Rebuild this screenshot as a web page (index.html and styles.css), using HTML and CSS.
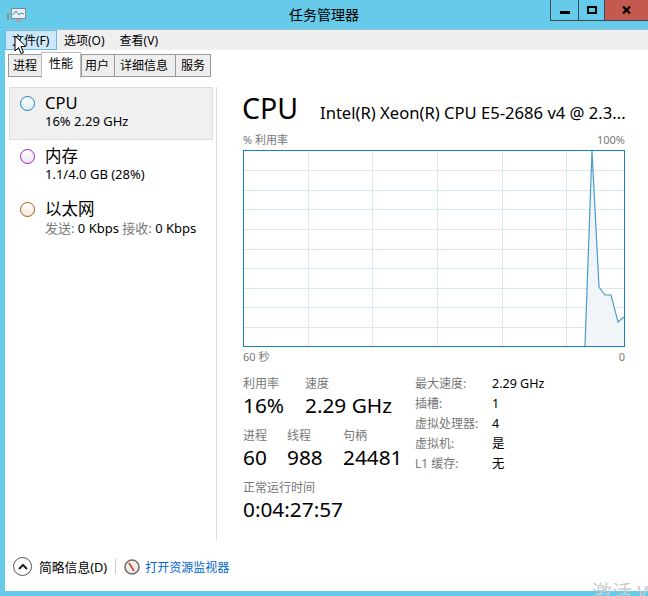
FILE: index.html
```html
<!DOCTYPE html>
<html lang="zh-CN">
<head>
    <meta charset="UTF-8">
    <title>任务管理器</title>
    <link rel="stylesheet" href="styles.css">
</head>
<body>
    <div class="window">
        <header class="titlebar">
            <svg class="app-icon" width="20" height="15" viewBox="0 0 20 15">
                <rect x="0" y="5" width="2" height="7" fill="#7d9a84"/>
                <rect x="4.5" y="0.5" width="14" height="10" fill="#e8f2f6" stroke="#7b8a92"/>
                <path d="M6 7 L9 3 L12 7 L14 5 L17 6" fill="none" stroke="#3f8fc0"/>
                <rect x="9" y="11" width="5" height="3" fill="#9aa6ac"/>
            </svg>
            <div class="title">任务管理器</div>
            <div class="controls">
                <div class="ctl ctl-min"><span class="min-bar"></span></div>
                <div class="ctl ctl-max"><span class="max-box"></span></div>
                <div class="ctl ctl-close">
                    <svg width="9" height="8" viewBox="0 0 9 8"><path d="M1 0.5 L8 7.5 M8 0.5 L1 7.5" stroke="#000" stroke-width="2.2"/></svg>
                </div>
            </div>
        </header>

        <nav class="menubar">
            <div class="menu-item hover">文件(F)</div>
            <div class="menu-item">选项(O)</div>
            <div class="menu-item menu-view">查看(V)</div>
        </nav>

        <div class="tabs">
            <div class="tab">进程</div>
            <div class="tab active">性能</div>
            <div class="tab tab-users">用户</div>
            <div class="tab tab-wide">详细信息</div>
            <div class="tab tab-last">服务</div>
        </div>

        <div class="content">
            <aside class="sidebar">
                <div class="res selected">
                    <span class="dot dot-cpu"></span>
                    <div>
                        <div class="res-name">CPU</div>
                        <div class="res-sub">16% 2.29 GHz</div>
                    </div>
                </div>
                <div class="res">
                    <span class="dot dot-mem"></span>
                    <div>
                        <div class="res-name">内存</div>
                        <div class="res-sub">1.1/4.0 GB (28%)</div>
                    </div>
                </div>
                <div class="res res-net">
                    <span class="dot dot-net"></span>
                    <div>
                        <div class="res-name">以太网</div>
                        <div class="res-sub"><span class="muted">发送:</span> 0 Kbps <span class="muted">接收:</span> 0 Kbps</div>
                    </div>
                </div>
            </aside>

            <main class="detail">
                <div class="detail-head">
                    <h1>CPU</h1>
                    <div class="model">Intel(R) Xeon(R) CPU E5-2686 v4 @ 2.3...</div>
                </div>
                <div class="axis axis-top"><span>% 利用率</span><span>100%</span></div>
                <svg class="chart" width="382" height="197" viewBox="0 0 382 197">
                    <g stroke="#d9e9f3" stroke-width="1">
                        <path d="M0 20.5H382M0 40.5H382M0 59.5H382M0 79.5H382M0 99.5H382M0 118.5H382M0 138.5H382M0 157.5H382M0 177.5H382"/>
                        <path d="M65.5 0V197M129.5 0V197M194.5 0V197M259.5 0V197M323.5 0V197"/>
                    </g>
                    <path d="M342 196 L349 1 L356 137 L362 145 L368 145 L375 172 L381 167 V196 Z" fill="#f0f5fa"/>
                    <path d="M342 196 L349 1 L356 137 L362 145 L368 145 L375 172 L381 167" fill="none" stroke="#4a9ccb" stroke-width="1.2"/>
                    <rect x="0.5" y="0.5" width="381" height="196" fill="none" stroke="#1a7fb8"/>
                </svg>
                <div class="axis axis-bottom"><span>60 秒</span><span>0</span></div>

                <div class="stats">
                    <div class="stats-left">
                        <div class="stat-row">
                            <div class="stat stat-usage"><div class="stat-label">利用率</div><div class="stat-value">16%</div></div>
                            <div class="stat"><div class="stat-label">速度</div><div class="stat-value">2.29 GHz</div></div>
                        </div>
                        <div class="stat-row">
                            <div class="stat stat-proc"><div class="stat-label">进程</div><div class="stat-value">60</div></div>
                            <div class="stat stat-thread"><div class="stat-label">线程</div><div class="stat-value">988</div></div>
                            <div class="stat"><div class="stat-label">句柄</div><div class="stat-value">24481</div></div>
                        </div>
                        <div class="stat-row">
                            <div class="stat"><div class="stat-label">正常运行时间</div><div class="stat-value">0:04:27:57</div></div>
                        </div>
                    </div>
                    <dl class="specs">
                        <dt>最大速度:</dt><dd>2.29 GHz</dd>
                        <dt>插槽:</dt><dd>1</dd>
                        <dt>虚拟处理器:</dt><dd>4</dd>
                        <dt>虚拟机:</dt><dd>是</dd>
                        <dt>L1 缓存:</dt><dd>无</dd>
                    </dl>
                </div>
            </main>
        </div>

        <footer class="footer">
            <span class="chevron">
                <svg width="10" height="7" viewBox="0 0 10 7"><path d="M1 6 L5 2 L9 6" fill="none" stroke="#222" stroke-width="2"/></svg>
            </span>
            <span class="less">简略信息(D)</span>
            <span class="sep"></span>
            <svg class="gauge" width="16" height="16" viewBox="0 0 16 16">
                <circle cx="8" cy="8" r="7" fill="#f3efe8" stroke="#77706a" stroke-width="1.6"/>
                <path d="M5 4 L10 12" stroke="#c8362c" stroke-width="1.5"/>
            </svg>
            <a class="monitor">打开资源监视器</a>
        </footer>
    </div>

    <svg class="cursor" width="13" height="20" viewBox="0 0 13 20">
        <path d="M1 1 V16 L4.5 12.5 L7 18.5 L9.5 17.5 L7 11.5 L12 11.5 Z" fill="#fff" stroke="#000"/>
    </svg>
    <div class="watermark">激活 Windows</div>
</body>
</html>
```

FILE: styles.css
```css
html, body { margin: 0; padding: 0; }
body {
    position: relative;
    width: 648px;
    height: 596px;
    overflow: hidden;
    font-family: "Noto Sans", "Noto Sans CJK SC", sans-serif;
    color: #000;
}

.window {
    display: flex;
    flex-direction: column;
    height: 596px;
    box-sizing: border-box;
    padding: 0 0 5px 5px;
    background-color: #66cbea;
}

/* Title bar */
.titlebar {
    display: grid;
    grid-template-columns: 1fr auto 1fr;
    height: 29px;
    flex: none;
    margin-left: -5px;
}
.app-icon { margin: 8px 0 0 7px; }
.title { font-size: 14px; line-height: 29px; }
.controls { display: flex; justify-self: end; height: 20px; }
.ctl {
    display: flex;
    align-items: center;
    justify-content: center;
    box-sizing: border-box;
    height: 21px;
    border: 1px solid #3f4a50;
    border-top: none;
    border-right: none;
}
.ctl-min { width: 28px; }
.ctl-max { width: 26px; }
.ctl-close { width: 44px; background-color: #c45a4f; border-right: none; }
.min-bar { display: block; width: 10px; height: 3px; margin-top: 4px; background: #000; }
.max-box { display: block; box-sizing: border-box; width: 10px; height: 8px; border: 2px solid #000; }

/* Menu */
.menubar {
    display: flex;
    height: 21px;
    flex: none;
    box-sizing: border-box;
    border-top: 1px solid #9fc4d2;
    background-color: #efefef;
    font-size: 12px;
}
.menu-item { padding: 0 6px; line-height: 19px; height: 20px; box-sizing: border-box; border: 1px solid transparent; }
.menu-item.hover { background-color: #cde8fa; border-color: #6cb8e0; width: 52px; }
.menu-view { margin-left: 1px; }

/* Tabs */
.tabs {
    display: flex;
    align-items: flex-end;
    height: 27px;
    flex: none;
    padding-left: 3px;
    background-color: #fff;
    font-size: 12px;
}
.tab {
    box-sizing: border-box;
    height: 23px;
    padding: 0 4px;
    line-height: 21px;
    background-color: #eee;
    border: 1px solid #999;
    border-right-width: 0;
}
.tab-users { padding: 0 5px 0 3px; }
.tab-wide { padding: 0 7px 0 5px; }
.tab-last { padding: 0 5px; border-right-width: 1px; }
.tab.active {
    height: 26px;
    margin-bottom: -1px;
    padding: 0 7px;
    line-height: 22px;
    background-color: #fff;
    border: 1px solid #bbb;
    border-bottom: none;
    position: relative;
}

/* Left column + detail */
.content { display: flex; flex: 1; background-color: #fff; min-height: 0; }
.sidebar {
    width: 208px;
    box-sizing: border-box;
    padding: 10px 0 0 4px;
    flex: none;
    margin-bottom: 11px;
}
.res { display: flex; align-items: flex-start; height: 53px; box-sizing: border-box; padding: 5px 0 0 10px; border: 1px solid transparent; }
.res.selected { background-color: #f0f0f0; border-color: #ddd; }
.dot { width: 13px; height: 13px; margin: 3px 10px 0 0; border-radius: 50%; border: 1px solid; flex: none; box-sizing: content-box; }
.dot-cpu { border-color: #1c84c0; background: linear-gradient(#fff, #dcecf6); }
.dot-mem { border-color: #9528b4; background: linear-gradient(#fff, #f1e2f6); }
.dot-net { border-color: #a75a14; background: linear-gradient(#fff, #f4e6d8); }
.res-name { font-size: 16.5px; line-height: 20px; }
.res-sub { font-size: 13px; line-height: 16px; white-space: nowrap; }
.res-net .res-sub { margin-top: 1px; }
.muted { color: #777; }

.detail {
    flex: 1;
    min-width: 0;
    margin: 10px 0 11px 3px;
    padding: 0 0 0 26px;
    border-left: 1px solid #ddd;
}
.detail-head { display: flex; align-items: baseline; height: 40px; padding-top: 2px; box-sizing: border-box; margin-left: -1px; }
.detail-head h1 { margin: 0; font-size: 28.5px; font-weight: 400; line-height: 38px; width: 78px; }
.model { font-size: 16.6px; white-space: nowrap; }
.axis { display: flex; justify-content: space-between; width: 382px; font-size: 11px; color: #777; line-height: 14px; }
.axis-top { margin-top: 6px; margin-bottom: 3px; }
.axis-bottom { margin-top: 3px; }
.chart { display: block; }

.stats { display: flex; margin-top: 12px; }
.stats-left { width: 172px; flex: none; }
.stat-row { display: flex; height: 52px; }
.stat-label { font-size: 12px; line-height: 16px; color: #777; white-space: nowrap; }
.stat-value { font-size: 20.8px; line-height: 28px; margin-top: -1px; white-space: nowrap; }
.stat-usage { width: 62px; }
.stat-proc { width: 44px; }
.stat-thread { width: 56px; }
.specs {
    display: grid;
    grid-template-columns: 77px auto;
    grid-auto-rows: 20px;
    margin: 0;
    font-size: 12px;
    line-height: 16px;
}
.specs dt { color: #777; white-space: nowrap; }
.specs dd { margin: 0; font-size: 12.5px; white-space: nowrap; }

/* Footer */
.footer {
    display: flex;
    align-items: center;
    box-sizing: border-box;
    height: 41px;
    flex: none;
    padding: 0 0 8px 8px;
    background-color: #fff;
    font-size: 12px;
    margin-top: -1px;
}
.chevron {
    display: flex;
    align-items: center;
    justify-content: center;
    box-sizing: border-box;
    width: 19px;
    height: 19px;
    border: 1.5px solid #555;
    border-radius: 50%;
}
.less { margin-left: 7px; font-size: 12.8px; white-space: nowrap; }
.sep { width: 1px; height: 15px; margin: 0 8px; background: #ccc; }
.monitor { margin-left: 5px; color: #0066cc; white-space: nowrap; }

/* Over everything */
.cursor { position: absolute; left: 14px; top: 35px; }
.watermark {
    position: absolute;
    left: 592px;
    top: 580px;
    width: 56px;
    height: 16px;
    overflow: hidden;
    font-size: 20px;
    line-height: 26px;
    color: #ccc;
    white-space: nowrap;
}
```
